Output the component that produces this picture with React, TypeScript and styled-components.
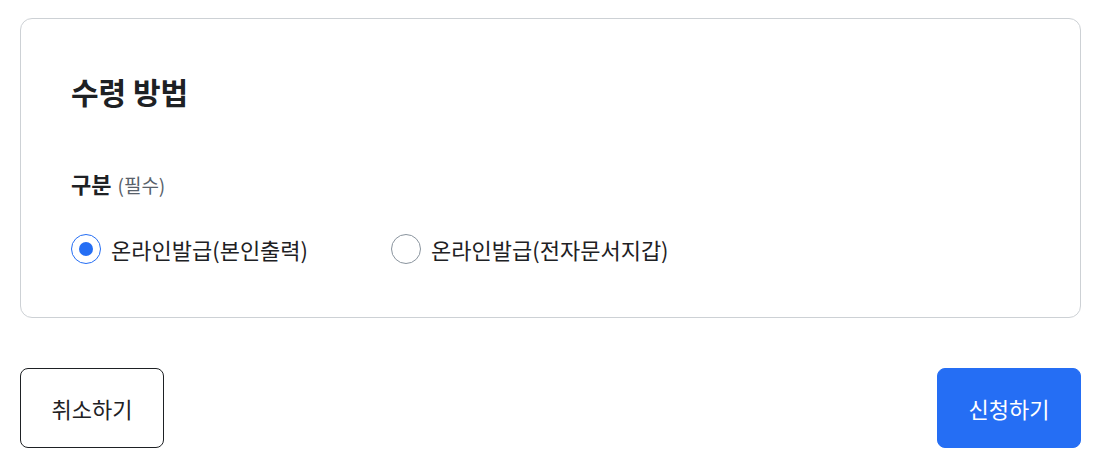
import React, { useState } from "react";
import styled, { createGlobalStyle } from "styled-components";

const GlobalStyle = createGlobalStyle`
  html, body {
    margin: 0;
    padding: 0;
    background: #fff;
  }
  body {
    font-family: "Noto Sans CJK KR", "Noto Sans", sans-serif;
    color: #1e2124;
  }
`;

const options = ["온라인발급(본인출력)", "온라인발급(전자문서지갑)"];

const App = () => {
  const [selected, setSelected] = useState(0);

  return (
    <>
      <GlobalStyle />
      <Page>
        <Card>
          <Title>수령 방법</Title>
          <Field>
            <Label>
              구분 <Required>(필수)</Required>
            </Label>
            <RadioGroup>
              {options.map((opt, i) => (
                <RadioItem key={opt} onClick={() => setSelected(i)}>
                  <RadioCircle checked={selected === i} />
                  <RadioText>{opt}</RadioText>
                </RadioItem>
              ))}
            </RadioGroup>
          </Field>
        </Card>
        <Actions>
          <Button variant="outline">취소하기</Button>
          <Button variant="primary">신청하기</Button>
        </Actions>
      </Page>
    </>
  );
};

export default App;

const Page = styled.div`
  padding: 18px 16px 0 20px;
`;

const Card = styled.section`
  border: 1px solid #cdd1d5;
  border-radius: 12px;
  padding: 50px 50px 53px;
`;

const Title = styled.h2`
  margin: 0;
  font-size: 30px;
  font-weight: 700;
  line-height: 44px;
  color: #1e2124;
`;

const Field = styled.div`
  margin-top: 55px;
`;

const Label = styled.div`
  display: flex;
  align-items: baseline;
  gap: 6px;
  height: 30px;
  font-size: 22px;
  font-weight: 700;
  line-height: 30px;
  color: #1e2124;
`;

const Required = styled.span`
  font-size: 19px;
  font-weight: 400;
  color: #58616a;
`;

const RadioGroup = styled.div`
  display: flex;
  gap: 83px;
  margin-top: 36px;
`;

const RadioItem = styled.label`
  display: flex;
  align-items: center;
  gap: 10px;
  cursor: pointer;
`;

const RadioCircle = styled.span<{ checked: boolean }>`
  width: 30px;
  height: 30px;
  box-sizing: border-box;
  border-radius: 50%;
  border: 1px solid ${(p) => (p.checked ? "#256ef4" : "#8a949e")};
  display: flex;
  align-items: center;
  justify-content: center;
  background: #fff;

  &::after {
    content: "";
    width: 14px;
    height: 14px;
    border-radius: 50%;
    background: ${(p) => (p.checked ? "#256ef4" : "transparent")};
  }
`;

const RadioText = styled.span`
  font-size: 22px;
  line-height: 30px;
  color: #1e2124;
`;

const Actions = styled.div`
  display: flex;
  justify-content: space-between;
  margin-top: 50px;
`;

const Button = styled.button<{ variant: "outline" | "primary" }>`
  width: 144px;
  height: 80px;
  box-sizing: border-box;
  border-radius: 8px;
  font-family: "Noto Sans CJK KR", "Noto Sans", sans-serif;
  font-size: 22px;
  cursor: pointer;
  border: 1px solid ${(p) => (p.variant === "primary" ? "#256ef4" : "#1e2124")};
  background: ${(p) => (p.variant === "primary" ? "#256ef4" : "#fff")};
  color: ${(p) => (p.variant === "primary" ? "#fff" : "#1e2124")};
`;
